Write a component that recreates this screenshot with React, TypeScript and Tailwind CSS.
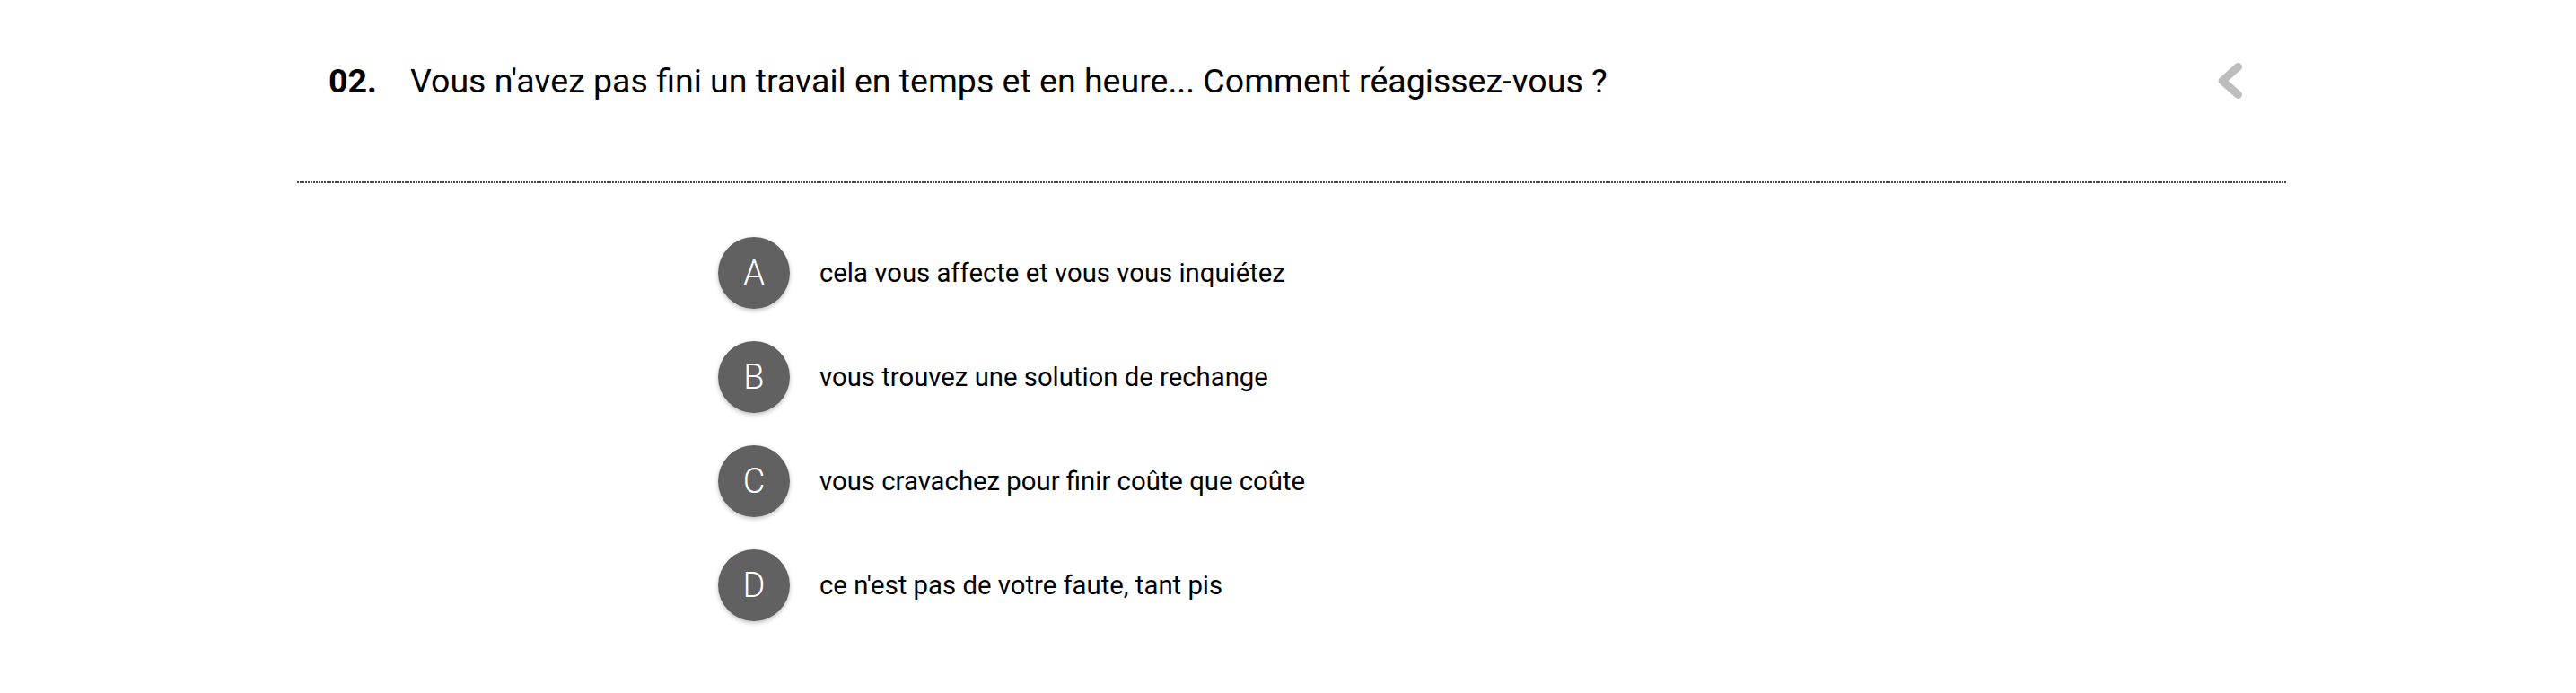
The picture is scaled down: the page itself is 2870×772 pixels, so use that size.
import React from "react";

const options = [
  { letter: "A", text: "cela vous affecte et vous vous inquiétez" },
  { letter: "B", text: "vous trouvez une solution de rechange" },
  { letter: "C", text: "vous cravachez pour finir coûte que coûte" },
  { letter: "D", text: "ce n'est pas de votre faute, tant pis" },
];

export default function App() {
  return (
    <div className="w-[2870px] h-[772px] bg-white font-['Roboto',sans-serif] text-black">
      <div className="ml-[331px] w-[2217px]">
        <div className="flex items-center h-[180px] pl-[35px] pr-[50px]">
          <span className="w-[91px] text-[37.5px] leading-[36px] font-bold">02.</span>
          <span className="text-[37.5px] leading-[36px] font-normal">
            Vous n'avez pas fini un travail en temps et en heure... Comment réagissez-vous ?
          </span>
          <svg
            className="ml-auto"
            width="27"
            height="40"
            viewBox="0 0 27 40"
            fill="none"
          >
            <polyline
              points="22.5,4.5 5,20 22.5,35.5"
              stroke="#bdbdbd"
              strokeWidth="9"
              strokeLinecap="round"
              strokeLinejoin="round"
            />
          </svg>
        </div>
        <div className="h-[22px]" />
        <div className="h-[2px] bg-[linear-gradient(to_right,#4a4a4a_2px,transparent_2px)] bg-[length:3px_2px]" />
        <div className="mt-[60px] pl-[469px] flex flex-col gap-[36px]">
          {options.map((o) => (
            <div key={o.letter} className="flex items-center">
              <div className="w-20 h-20 rounded-full bg-[#616161] text-white flex items-center justify-center text-[38px] leading-[38px] font-light shadow-[0_2px_5px_0_rgba(0,0,0,0.26)]">
                {o.letter}
              </div>
              <span className="ml-[33px] text-[29.3px] leading-[32px]">{o.text}</span>
            </div>
          ))}
        </div>
      </div>
    </div>
  );
}
